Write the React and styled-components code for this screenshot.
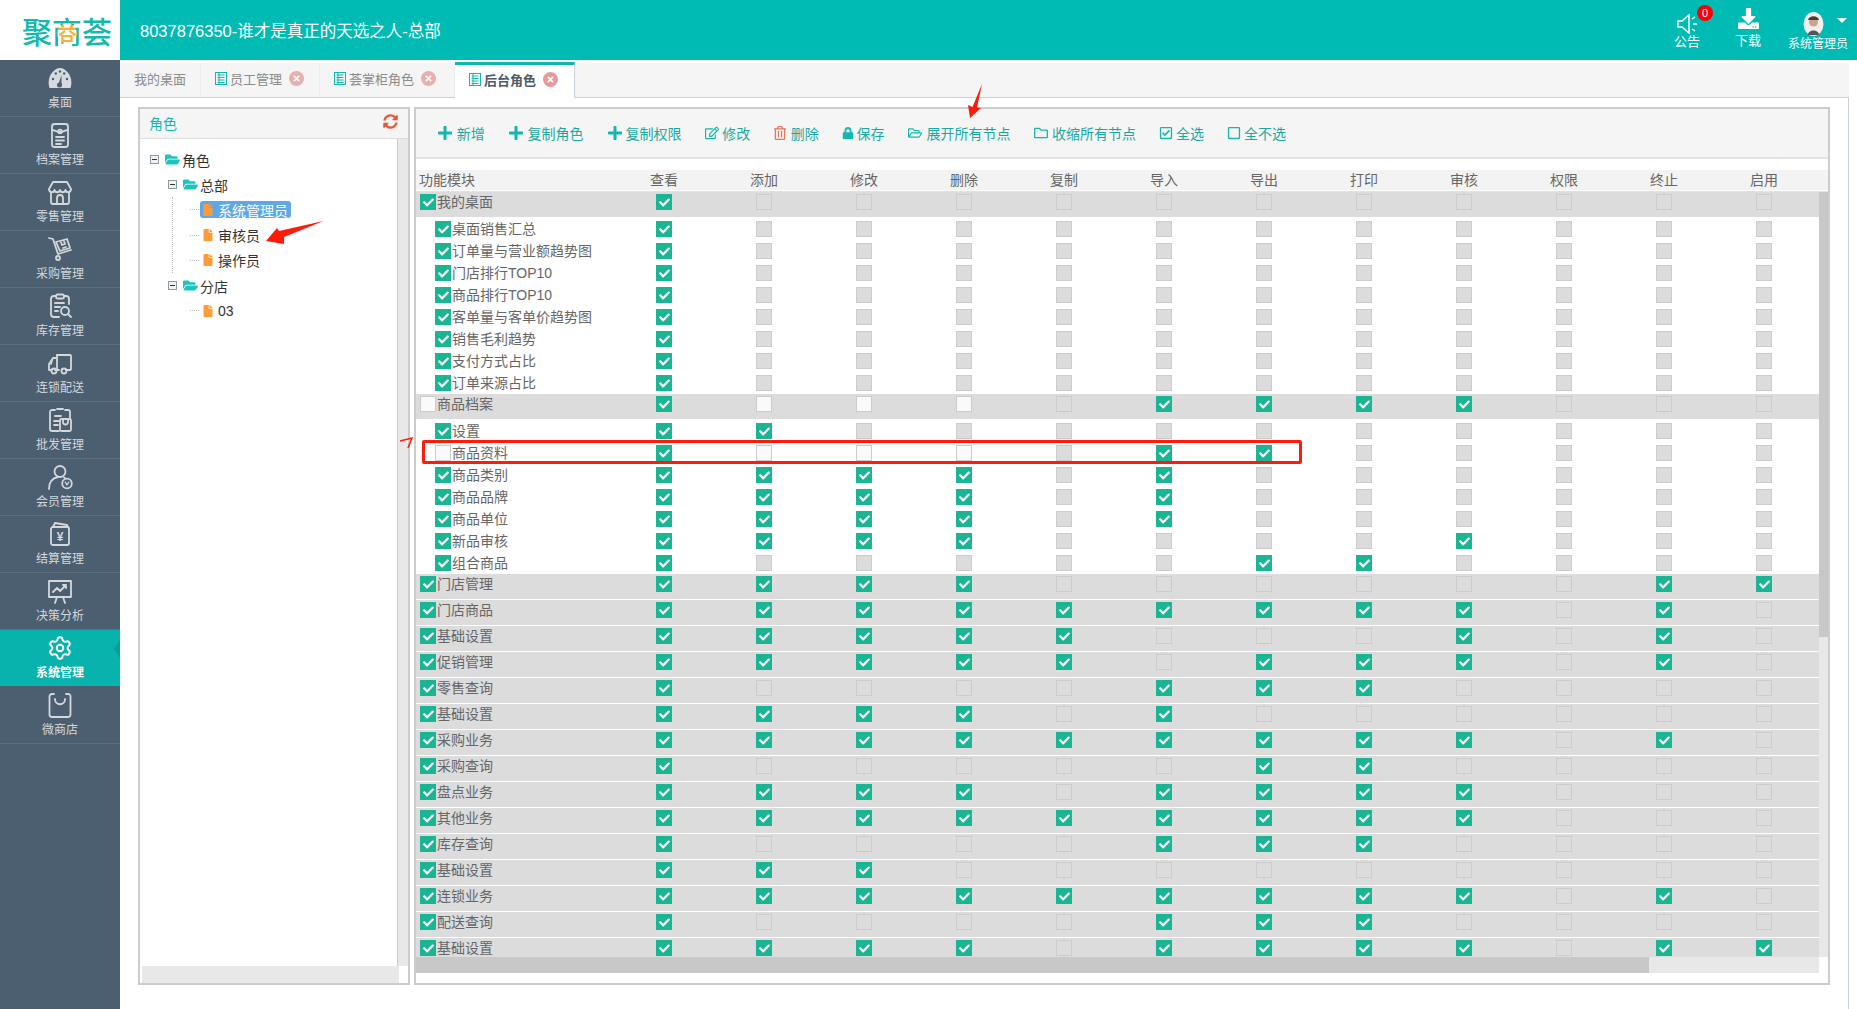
import React from "react";
import styled, { createGlobalStyle } from "styled-components";
import {
  FaPlus, FaRegEdit, FaRegTrashAlt, FaLock, FaRegFolderOpen, FaRegFolder,
  FaRegCheckSquare, FaRegSquare, FaSyncAlt, FaFolderOpen, FaFile, FaCheck,
  FaDownload, FaTimes,
} from "react-icons/fa";
import { Settings } from "lucide-react";

const Global = createGlobalStyle`
  html, body { margin: 0; padding: 0; background: #fff; }
  body { font-family: "Liberation Sans", "Noto Sans CJK SC", sans-serif; overflow: hidden; }
  * { box-sizing: border-box; }
`;

//Page
const Page = styled.div`
  position: relative;
  width: 1857px;
  height: 1009px;
  overflow: hidden;
  display: flex;
  flex-direction: column;
`;

//Top bar
const Top = styled.header`
  height: 60px;
  flex: none;
  display: flex;
  align-items: center;
  background: #00bbb4;
  color: #fff;
`;

const LogoBox = styled.div`
  width: 120px;
  height: 60px;
  background: #fff;
  display: flex;
  align-items: center;
  justify-content: center;
  padding-left: 14px;
`;

const Logo = styled.span`
  font-family: "Noto Sans CJK SC", sans-serif;
  font-size: 30px;
  font-weight: 500;
  color: #14b9ae;
  white-space: nowrap;
`;

const LogoMid = styled.span`
  background: radial-gradient(circle at 50% 58%, #f5b13c 0 32%, #14b9ae 36%);
  -webkit-background-clip: text;
  background-clip: text;
  color: transparent;
`;

const Title = styled.div`
  margin-left: 20px;
  font-size: 16.5px;
  flex: 1;
`;

const HeadItem = styled.div`
  position: relative;
  width: ${(p) => p.$w}px;
  height: 60px;
  display: flex;
  flex-direction: column;
  align-items: center;
  justify-content: flex-end;
  padding-bottom: ${(p) => p.$pb || 10}px;
`;

const HeadLabel = styled.span`
  font-size: ${(p) => p.$size || 13}px;
  line-height: 16px;
  white-space: nowrap;
`;

const Badge = styled.span`
  position: absolute;
  top: 5px;
  left: 31px;
  width: 16px;
  height: 16px;
  border-radius: 8px;
  background: #f00;
  color: #fff;
  font-size: 11px;
  line-height: 16px;
  text-align: center;
`;

const Caret = styled.span`
  position: absolute;
  top: 18px;
  right: 1px;
  border-left: 5px solid transparent;
  border-right: 5px solid transparent;
  border-top: 5px solid #fff;
`;

const Avatar = styled.svg.attrs({ viewBox: "0 0 23 24" })`
  width: 23px;
  height: 24px;
  margin: 0 10px 0 0;
`;

const Download = styled(FaDownload)`
  font-size: 21px;
  margin-bottom: 4px;
`;

const HeadRight = styled.div`
  display: flex;
  padding-right: 9px;
`;

//Body under the top bar
const Body = styled.div`
  flex: 1;
  display: flex;
  min-height: 0;
`;

const Side = styled.nav`
  width: 120px;
  flex: none;
  background: #4c5f70;
`;

const SideItem = styled.div`
  position: relative;
  height: 57px;
  padding-top: 5px;
  display: flex;
  flex-direction: column;
  align-items: center;
  border-bottom: 1px solid ${(p) => (p.$active ? "#4c5f70" : "#5b6e80")};
  background: ${(p) => (p.$active ? "#08b3ad" : "transparent")};
  color: ${(p) => (p.$active ? "#fff" : "#d4d8dc")};
  font-size: 12px;
  line-height: 16px;

  span { margin-top: 4px; font-weight: ${(p) => (p.$active ? 600 : 400)}; }
  &::after {
    content: "";
    display: ${(p) => (p.$active ? "block" : "none")};
    position: absolute;
    right: 0;
    top: 10px;
    border-top: 9px solid transparent;
    border-bottom: 9px solid transparent;
    border-right: 6px solid #0a9c98;
  }
`;

const Glyph = styled.svg.attrs({ viewBox: "0 0 26 26" })`
  width: 26px;
  height: 26px;
  fill: none;
  stroke: ${(p) => (p.$solid ? "none" : "currentColor")};
  stroke-width: 1.8;
  stroke-linecap: round;
  stroke-linejoin: round;
  flex: none;
`;

const Main = styled.main`
  flex: 1;
  display: flex;
  flex-direction: column;
  min-width: 0;
  padding-right: 8px;
`;

const Tabs = styled.div`
  margin-top: 3px;
  height: 35px;
  flex: none;
  display: flex;
  background: #f5f5f5;
  border-bottom: 1px solid #c9d1d8;
`;

const Tab = styled.div`
  height: ${(p) => (p.$active ? "36px" : "34px")};
  display: flex;
  align-items: center;
  padding: 0 ${(p) => p.$pr || 14}px ${(p) => (p.$active ? 5 : 4)}px 14px;
  font-size: 13px;
  color: ${(p) => (p.$active ? "#4f5b66" : "#8b8b8b")};
  font-weight: ${(p) => (p.$active ? 600 : 400)};
  background: ${(p) => (p.$active ? "#fff" : "transparent")};
  border-right: 1px solid ${(p) => (p.$active ? "#c9d1d8" : "#ececec")};
  border-top: ${(p) => (p.$active ? "3px solid #10b5ae" : "0")};
  margin-top: ${(p) => (p.$active ? "-1px" : "0")};
`;

const TabIcon = styled.svg.attrs({ viewBox: "0 0 12 13" })`
  width: 12px;
  height: 13px;
  margin-right: 3px;
  fill: none;
  stroke: #12b8b0;
  stroke-width: 1;
`;

const Close = styled.span`
  width: 15px;
  height: 15px;
  margin-left: 7px;
  border-radius: 50%;
  background: ${(p) => (p.$active ? "#e79a9a" : "#e9aeae")};
  color: #fff;
  display: flex;
  align-items: center;
  justify-content: center;
  font-size: 9px;
`;

const Work = styled.div`
  flex: 1;
  display: flex;
  gap: 4px;
  padding: 9px 18px 0 18px;
  border-right: 1px solid #c9d1d8;
  min-height: 0;
`;

//Role tree
const Panel = styled.section`
  height: 878px;
  border: 2px solid #ccc;
  display: flex;
  flex-direction: column;
  flex: ${(p) => (p.$grow ? "1" : "none")};
  width: ${(p) => (p.$grow ? "auto" : "272px")};
  min-width: 0;
  overflow: hidden;
`;

const TreeHead = styled.div`
  height: 30px;
  flex: none;
  display: flex;
  align-items: center;
  justify-content: space-between;
  padding: 0 10px 2px 9px;
  background: #f5f5f5;
  border-bottom: 1px solid #ddd;
  font-size: 14px;
  color: #19b3ac;
  svg { color: #e4593b; font-size: 15px; margin-top: -2px; }
`;

const TreeMid = styled.div`
  flex: 1;
  display: flex;
  min-height: 0;
`;

const Tree = styled.div`
  flex: 1;
  padding-top: 8px;
  font-size: 14px;
  color: #333;
`;

const VBar = styled.div`
  width: 11px;
  flex: none;
  background: #e8e8e8;
  border-left: 1px solid #ccc;
`;

const TreeFoot = styled.div`
  height: 17px;
  flex: none;
  display: flex;
  padding-left: 2px;
  div { width: 257px; background: #e8e8e8; }
`;

const TreeRow = styled.div`
  height: 25.2px;
  display: flex;
  align-items: center;
  padding-left: ${(p) => p.$indent || 0}px;
  svg { flex: none; }
`;

const Toggle = styled.span`
  width: 9px;
  height: 9px;
  flex: none;
  margin-right: 6px;
  border: 1px solid #8d99a5;
  background: #f0f3f5;
  position: relative;
  &::after {
    content: "";
    position: absolute;
    left: 1px;
    right: 1px;
    top: 3px;
    height: 1px;
    background: #333;
  }
`;

const Folder = styled(FaFolderOpen)`
  color: #1cc4bd;
  font-size: 15px;
  margin-right: 2px;
`;

const Branch = styled.div`
  margin-left: 32px;
  border-left: 1px dotted ${(p) => (p.$line ? "#bbb" : "transparent")};
`;

const Dots = styled.span`
  width: 9px;
  flex: none;
  margin: 0 1px 0 17px;
  border-top: 1px dotted #bbb;
`;

const Leaf = styled.span`
  height: 17px;
  display: flex;
  align-items: center;
  padding: 0 3px 0 2px;
  border-radius: 3px;
  white-space: nowrap;
  background: ${(p) => (p.$selected ? "#5ea8ea" : "transparent")};
  color: ${(p) => (p.$selected ? "#fff" : "#333")};
  svg { color: #ff9c3a; font-size: 12px; margin-right: 4px; }
`;

//Permissions
const Bar = styled.div`
  height: 50px;
  flex: none;
  display: flex;
  align-items: center;
  gap: 23px;
  padding: 0 0 0 21px;
  background: #f5f5f5;
  border-bottom: 2px solid #e4e4e4;
`;

const Action = styled.span`
  display: flex;
  align-items: center;
  gap: ${(p) => p.$gap || 5}px;
  font-size: 14px;
  color: #19a9a2;
  white-space: nowrap;
  svg { color: ${(p) => p.$color || "#12b8b0"}; font-size: ${(p) => p.$icon || 14}px; }
`;

const HeadRow = styled.div`
  margin-top: 11px;
  height: 22px;
  flex: none;
  border-bottom: 1px solid #e2e2e2;
  box-shadow: inset 0 -1px 0 #fff;
  display: grid;
  grid-template-columns: 198px repeat(12, 100px);
  background: linear-gradient(#f3f3f3 20px, #fff 20px);
  font-size: 14px;
  line-height: 20px;
  color: #666;
  span { text-align: center; }
  span:first-child { text-align: left; padding-left: 3px; }
`;

const Scroller = styled.div`
  flex: 1;
  display: flex;
  min-height: 0;
`;

const Rows = styled.div`
  flex: 1;
  overflow: hidden;
`;

const Track = styled.div`
  width: 9px;
  flex: none;
  background: #e8e8e8;
  div { height: 445px; background: #c8c8c8; }
`;

const Row = styled.div`
  display: grid;
  grid-template-columns: 198px repeat(12, 100px);
  align-items: start;
  height: ${(p) => (p.$group ? "25px" : "22px")};
  margin-bottom: ${(p) => (p.$group ? "1px" : "0")};
  padding-top: ${(p) => (p.$group ? "2px" : "3px")};
  background: ${(p) => (p.$group ? "#dcdcdc" : "#fff")};
`;

const NameCell = styled.div`
  display: flex;
  align-items: center;
  gap: 1px;
  padding-left: ${(p) => (p.$group ? 4 : 19)}px;
  font-size: 14px;
  line-height: 16px;
  color: #666;
  white-space: nowrap;
`;

const Cell = styled.div`
  display: flex;
  justify-content: center;
`;

const Box = styled.span`
  width: 16px;
  height: 16px;
  flex: none;
  display: flex;
  align-items: center;
  justify-content: center;
  color: #fff;
  font-size: 11px;
  background: ${(p) => (p.$state === 1 ? "#1cb594" : p.$state === 2 ? "#fafafa" : "#dcdcdc")};
  border: ${(p) => (p.$state === 1 ? "0" : "1px solid #ccc")};
`;

const HFoot = styled.div`
  height: 26px;
  flex: none;
  padding-bottom: 10px;
  padding-right: 9px;
  display: flex;
  b { width: 1233px; background: #c8c8c8; }
  i { flex: 1; background: #e8e8e8; }
`;

//Hand drawn marks on top of the screenshot
const Marks = styled.svg`
  position: absolute;
  left: 0;
  top: 0;
  pointer-events: none;
`;

const RedBox = styled.div`
  position: absolute;
  left: 422px;
  top: 440px;
  width: 880px;
  height: 24px;
  border: 3px solid #ff1a0a;
  border-radius: 2px;
  pointer-events: none;
`;

const columns = ["查看", "添加", "修改", "删除", "复制", "导入", "导出", "打印", "审核", "权限", "终止", "启用"];

// 1 checked, 2 enabled but empty, 0 disabled
const rows = [
  ["我的桌面", true, true, "100000000000"],
  ["桌面销售汇总", false, true, "100000000000"],
  ["订单量与营业额趋势图", false, true, "100000000000"],
  ["门店排行TOP10", false, true, "100000000000"],
  ["商品排行TOP10", false, true, "100000000000"],
  ["客单量与客单价趋势图", false, true, "100000000000"],
  ["销售毛利趋势", false, true, "100000000000"],
  ["支付方式占比", false, true, "100000000000"],
  ["订单来源占比", false, true, "100000000000"],
  ["商品档案", true, false, "122201111000"],
  ["设置", false, true, "110000000000"],
  ["商品资料", false, false, "122201100000"],
  ["商品类别", false, true, "111101000000"],
  ["商品品牌", false, true, "111101000000"],
  ["商品单位", false, true, "111101000000"],
  ["新品审核", false, true, "111100001000"],
  ["组合商品", false, true, "100000110000"],
  ["门店管理", true, true, "111100000011"],
  ["门店商品", true, true, "111111111010"],
  ["基础设置", true, true, "111110001010"],
  ["促销管理", true, true, "111110111010"],
  ["零售查询", true, true, "100001110000"],
  ["基础设置", true, true, "111101000000"],
  ["采购业务", true, true, "111111111010"],
  ["采购查询", true, true, "100000110000"],
  ["盘点业务", true, true, "111101111000"],
  ["其他业务", true, true, "111111111000"],
  ["库存查询", true, true, "100001110000"],
  ["基础设置", true, true, "111000000000"],
  ["连锁业务", true, true, "111111111010"],
  ["配送查询", true, true, "100001110000"],
  ["基础设置", true, true, "111101111011"],
];

const Check = ({ state }) => <Box $state={state}>{state === 1 && <FaCheck />}</Box>;

const icons = {
  desk: (
    <Glyph $solid>
      <path d="M2.5 23C-1 12 7 3 13 3s14 9 10.5 20z" fill="#d6dadf" />
      <g fill="#4c5f70">
        <circle cx="6" cy="14" r="1.2" /><circle cx="8.8" cy="8.5" r="1.2" /><circle cx="13" cy="6.5" r="1.2" />
        <circle cx="17.2" cy="8.5" r="1.2" /><circle cx="20" cy="14" r="1.2" />
        <circle cx="12.5" cy="20" r="2.5" /><path d="M11.5 19l3-9 0 10z" />
      </g>
    </Glyph>
  ),
  file: (
    <Glyph>
      <rect x="5" y="2" width="16" height="23" rx="2.5" />
      <path d="M5 8c3 0 4 2 8 2s5-2 8-2M9 15h8M9 18.5h8M9 22h5" />
      <circle cx="13" cy="9.5" r="1.8" />
    </Glyph>
  ),
  store: (
    <Glyph>
      <path d="M6 3h14l4 7c0 4-5 4-5.5 1-.5 3-5 3-5.5 0-.5 3-5 3-5.5 0C7 14 2 14 2 10z" />
      <path d="M4 14v9a2 2 0 002 2h14a2 2 0 002-2v-9M10 25v-6a3 3 0 016 0v6" />
    </Glyph>
  ),
  cart: (
    <Glyph>
      <path d="M2 2l4 1 5 15 13-4" />
      <path d="M9 6l11-3 3 9-10 3zM14 6l1 3 3-1-1-3M16 12l3-1" />
      <circle cx="11" cy="22" r="2" />
    </Glyph>
  ),
  stock: (
    <Glyph>
      <path d="M9 3H7a3 3 0 00-3 3v15a3 3 0 003 3h5M17 3h2a3 3 0 013 3v5" />
      <rect x="9" y="1.5" width="8" height="4" rx="1.5" />
      <path d="M8 10h9M8 14h5M8 18h3" />
      <circle cx="18" cy="18" r="4" /><path d="M21 21l3 3" />
    </Glyph>
  ),
  truck: (
    <Glyph>
      <path d="M10 5h13a1 1 0 011 1v13a1 1 0 01-1 1h-4M12 20h-4" />
      <path d="M10 5v15M10 8H6L2 14v6h2" />
      <circle cx="7" cy="21" r="2.5" /><circle cx="17" cy="21" r="2.5" />
      <path d="M5 10l-1 4" />
    </Glyph>
  ),
  batch: (
    <Glyph>
      <path d="M8 3H5a2 2 0 00-2 2v17a2 2 0 002 2h7M18 3h3a2 2 0 012 2v6" />
      <path d="M10 2h6M8 9h6M7 14h5M7 18h4" />
      <rect x="13" y="12" width="11" height="12" rx="1.5" />
      <path d="M16 12v3a2.5 2.5 0 005 0v-3" />
    </Glyph>
  ),
  member: (
    <Glyph>
      <circle cx="13" cy="7.5" r="5.5" />
      <path d="M2 25c0-7 4-11 9-12M17 13.5l1 .5" />
      <circle cx="20" cy="19.5" r="4.8" />
      <path d="M18.2 18l1.8 3 1.8-3" strokeWidth="1.3" />
    </Glyph>
  ),
  wallet: (
    <Glyph>
      <rect x="4" y="6" width="18" height="18" rx="2" />
      <path d="M6 6l2-4 12 2 1 2" />
      <text x="13" y="20" textAnchor="middle" fontSize="12" fontWeight="700" fill="currentColor" stroke="none">¥</text>
    </Glyph>
  ),
  chart: (
    <Glyph>
      <rect x="2" y="3" width="22" height="16" />
      <path d="M6 14l4-4 3 3 6-6M16 7h3v3M8 25l2-6M18 25l-2-6" />
    </Glyph>
  ),
  bag: (
    <Glyph>
      <path d="M7 2H5a2.5 2.5 0 00-2.5 2.5v18A2.5 2.5 0 005 25h16a2.5 2.5 0 002.5-2.5v-18A2.5 2.5 0 0021 2h-2" />
      <path d="M8 7c0 7 10 7 10 0" />
    </Glyph>
  ),
};

const menu = [
  ["desk", "桌面"], ["file", "档案管理"], ["store", "零售管理"], ["cart", "采购管理"],
  ["stock", "库存管理"], ["truck", "连锁配送"], ["batch", "批发管理"], ["member", "会员管理"],
  ["wallet", "结算管理"], ["chart", "决策分析"], ["gear", "系统管理"], ["bag", "微商店"],
];

const PageIcon = () => (
  <TabIcon>
    <rect x="0.5" y="0.5" width="11" height="12" />
    <path d="M2.5 3h7M2.5 5.5h7M2.5 8h7M2.5 10.5h7M4 1v11" />
  </TabIcon>
);

const App = () => {
  return (
    <>
      <Global />
      <Page>
        <Top>
          <LogoBox>
            <Logo>聚<LogoMid>商</LogoMid>荟</Logo>
          </LogoBox>
          <Title>8037876350-谁才是真正的天选之人-总部</Title>
          <HeadRight>
            <HeadItem $w={42}>
              <svg width="24" height="20" viewBox="0 0 24 20" fill="none" stroke="#fff" strokeWidth="1.5">
                <path d="M3 7h4l7-6v18l-7-6H3z" />
                <path d="M17 5l3-2M18 10h4M17 15l3 2" />
              </svg>
              <Badge>0</Badge>
              <HeadLabel>公告</HeadLabel>
            </HeadItem>
            <HeadItem $w={80} $pb={11}>
              <Download />
              <HeadLabel>下载</HeadLabel>
            </HeadItem>
            <HeadItem $w={60} $pb={8}>
              <Avatar>
                <ellipse cx="11.5" cy="12" rx="10" ry="12" fill="#f1efee" />
                <circle cx="11.5" cy="10" r="4.5" fill="#c9a58c" />
                <path d="M6 8c1-5 10-5 11 0z" fill="#4a3b35" />
                <path d="M6 23c0-6 11-6 11 0z" fill="#555" />
              </Avatar>
              <Caret />
              <HeadLabel $size={12}>系统管理员</HeadLabel>
            </HeadItem>
          </HeadRight>
        </Top>
        <Body>
          <Side>
            {menu.map(([key, label]) => (
              <SideItem key={label} $active={key === "gear"}>
                {key === "gear" ? <Settings size={26} strokeWidth={1.8} /> : icons[key]}
                <span>{label}</span>
              </SideItem>
            ))}
          </Side>
          <Main>
            <Tabs>
              <Tab>我的桌面</Tab>
              <Tab $pr={15}><PageIcon />员工管理<Close><FaTimes /></Close></Tab>
              <Tab $pr={18}><PageIcon />荟掌柜角色<Close><FaTimes /></Close></Tab>
              <Tab $active $pr={16}><PageIcon />后台角色<Close $active><FaTimes /></Close></Tab>
            </Tabs>
            <Work>
              <Panel>
                <TreeHead>角色<FaSyncAlt /></TreeHead>
                <TreeMid>
                  <Tree>
                    <TreeRow $indent={10}><Toggle /><Folder />角色</TreeRow>
                    <TreeRow $indent={28}><Toggle /><Folder />总部</TreeRow>
                    <Branch $line>
                      <TreeRow><Dots /><Leaf $selected><FaFile />系统管理员</Leaf></TreeRow>
                      <TreeRow><Dots /><Leaf><FaFile />审核员</Leaf></TreeRow>
                      <TreeRow><Dots /><Leaf><FaFile />操作员</Leaf></TreeRow>
                    </Branch>
                    <TreeRow $indent={28}><Toggle /><Folder />分店</TreeRow>
                    <Branch>
                      <TreeRow><Dots /><Leaf><FaFile />03</Leaf></TreeRow>
                    </Branch>
                  </Tree>
                  <VBar />
                </TreeMid>
                <TreeFoot><div /></TreeFoot>
              </Panel>
              <Panel $grow>
                <Bar>
                  <Action $icon={16} $gap={3.75}><FaPlus />新增</Action>
                  <Action $icon={16} $gap={3.75}><FaPlus />复制角色</Action>
                  <Action $icon={16} $gap={3}><FaPlus />复制权限</Action>
                  <Action $gap={3.75}><FaRegEdit />修改</Action>
                  <Action $gap={3.5} $color="#e07a5f"><FaRegTrashAlt />删除</Action>
                  <Action $icon={12} $gap={2.75}><FaLock />保存</Action>
                  <Action><FaRegFolderOpen />展开所有节点</Action>
                  <Action $gap={4.4}><FaRegFolder />收缩所有节点</Action>
                  <Action $gap={3}><FaRegCheckSquare />全选</Action>
                  <Action $gap={3.2}><FaRegSquare />全不选</Action>
                </Bar>
                <HeadRow>
                  <span>功能模块</span>
                  {columns.map((c) => <span key={c}>{c}</span>)}
                </HeadRow>
                <Scroller>
                  <Rows>
                    {rows.map(([name, group, on, cells], i) => (
                      <Row key={i} $group={group}>
                        <NameCell $group={group}>
                          <Check state={on ? 1 : 2} />
                          {name}
                        </NameCell>
                        {cells.split("").map((c, j) => (
                          <Cell key={j}><Check state={Number(c)} /></Cell>
                        ))}
                      </Row>
                    ))}
                  </Rows>
                  <Track><div /></Track>
                </Scroller>
                <HFoot><b /><i /></HFoot>
              </Panel>
            </Work>
          </Main>
        </Body>
        <RedBox />
        <Marks width="1857" height="1009">
          <polygon points="266,241 277,228 279,231 323.5,221 284,237 284,244" fill="#ff1a0a" />
          <polygon points="982,84 972.5,107 968,105 970,118 981,108 977,107.5" fill="#ff1a0a" />
          <polyline points="400,441 412,438 408,448" fill="none" stroke="#ff1a0a" strokeWidth="1.5" />
        </Marks>
      </Page>
    </>
  );
};

export default App;
